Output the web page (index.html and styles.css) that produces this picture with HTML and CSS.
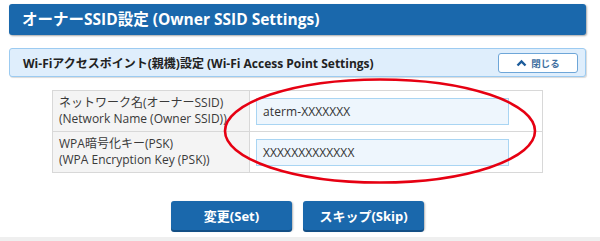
FILE: index.html
```html
<!DOCTYPE html>
<html lang="ja">
<head>
<meta charset="utf-8">
<link rel="stylesheet" href="styles.css">
</head>
<body>
<div class="page">
  <h1 class="title">オーナーSSID設定 (Owner SSID Settings)</h1>
  <div class="section-head">
    <span class="section-title">Wi-Fiアクセスポイント(親機)設定 (Wi-Fi Access Point Settings)</span>
    <button class="close-btn"><svg class="chev" width="11" height="8" viewBox="0 0 11 8"><path d="M1.5 6.5 L5.5 2.5 L9.5 6.5" fill="none" stroke="#1b5b9a" stroke-width="2.4"/></svg>閉じる</button>
  </div>
  <div class="form-wrap">
    <table class="form">
      <tr>
        <th>ネットワーク名(オーナーSSID)<br>(Network Name (Owner SSID))</th>
        <td><div class="field">aterm-XXXXXXX</div></td>
      </tr>
      <tr>
        <th>WPA暗号化キー(PSK)<br>(WPA Encryption Key (PSK))</th>
        <td><div class="field">XXXXXXXXXXXXX</div></td>
      </tr>
    </table>
    <svg class="mark-ellipse" width="330" height="112" viewBox="0 0 330 112"><ellipse cx="165" cy="56" rx="155" ry="51.5" fill="none" stroke="#e60012" stroke-width="2.6"/></svg>
  </div>
  <div class="actions">
    <div class="btn-wrap underlined"><button class="btn">変更(Set)</button></div>
    <div class="btn-wrap"><button class="btn">スキップ(Skip)</button></div>
  </div>
</div>
<div class="strip"></div>
</body>
</html>
```
FILE: styles.css
```css
html, body {
  margin: 0;
  padding: 0;
  background: #ffffff;
}
body {
  width: 600px;
  height: 241px;
  overflow: hidden;
  font-family: "Open Sans", "Noto Sans CJK JP", sans-serif;
  color: #333333;
}
.page {
  padding: 4px 14px 0 9px;
}
.title {
  margin: 0;
  height: 31px;
  box-sizing: border-box;
  background: #1a68ac;
  border-radius: 3px;
  box-shadow: 1px 1px 2px rgba(0,0,0,0.35);
  color: #ffffff;
  font-size: 15.5px;
  font-weight: bold;
  line-height: 31px;
  padding-left: 13px;
}
.section-head {
  margin-top: 13px;
  height: 29px;
  box-sizing: border-box;
  background: #dfeefc;
  border: 1px solid #9ccbf1;
  border-radius: 3px;
  box-shadow: 1px 1px 1px rgba(0,0,0,0.15);
  display: flex;
  align-items: center;
  justify-content: space-between;
  padding: 0 7px 0 13px;
}
.section-title {
  font-size: 12px;
  font-weight: bold;
  color: #222222;
}
.close-btn {
  width: 80px;
  height: 20px;
  box-sizing: border-box;
  background: #ffffff;
  border: 1px solid #6ea6d8;
  border-radius: 3px;
  display: flex;
  align-items: center;
  justify-content: center;
  gap: 4px;
  font-family: "Open Sans", "Noto Sans CJK JP", sans-serif;
  font-size: 9.5px;
  font-weight: bold;
  color: #3e6f9f;
  padding: 0;
}
.chev {
  display: block;
}
.form-wrap {
  position: relative;
  margin-top: 13px;
  display: flex;
  justify-content: center;
}
.form {
  border-collapse: collapse;
  width: 491px;
}
.form th, .form td {
  border: 1px solid #d8d8d8;
  height: 41px;
  box-sizing: border-box;
}
.form th {
  width: 197px;
  background: #f4f4f4;
  text-align: left;
  font-weight: normal;
  font-size: 12px;
  line-height: 16px;
  color: #3a3a3a;
  padding: 0 0 0 6px;
  vertical-align: middle;
}
.form td {
  background: #ffffff;
  padding: 0 0 0 6px;
  vertical-align: middle;
}
.field {
  width: 253px;
  height: 27px;
  box-sizing: border-box;
  background: #eef6fd;
  border: 1px solid #a9d5f3;
  font-size: 12px;
  line-height: 25px;
  padding-left: 6px;
  color: #333333;
  letter-spacing: 0.1px;
}
.mark-ellipse {
  position: absolute;
  left: 206px;
  top: -15px;
}
.actions {
  margin-top: 28px;
  display: flex;
  justify-content: center;
  gap: 9px;
}
.btn-wrap {
  padding: 0 1px 4px;
  border-bottom: 3px solid transparent;
  height: 33px;
}
.btn-wrap.underlined {
  border-bottom-color: #ee0000;
}
.btn {
  width: 121px;
  height: 29px;
  background: #1a68ac;
  border: none;
  border-radius: 3px;
  box-shadow: 0 2px 0 #134f85, 1px 1px 2px rgba(0,0,0,0.3);
  color: #ffffff;
  font-family: "Open Sans", "Noto Sans CJK JP", sans-serif;
  font-size: 13px;
  font-weight: bold;
  padding: 0;
}
.strip {
  position: absolute;
  left: 0;
  top: 237px;
  width: 600px;
  height: 4px;
  background: #efefef;
}
```
